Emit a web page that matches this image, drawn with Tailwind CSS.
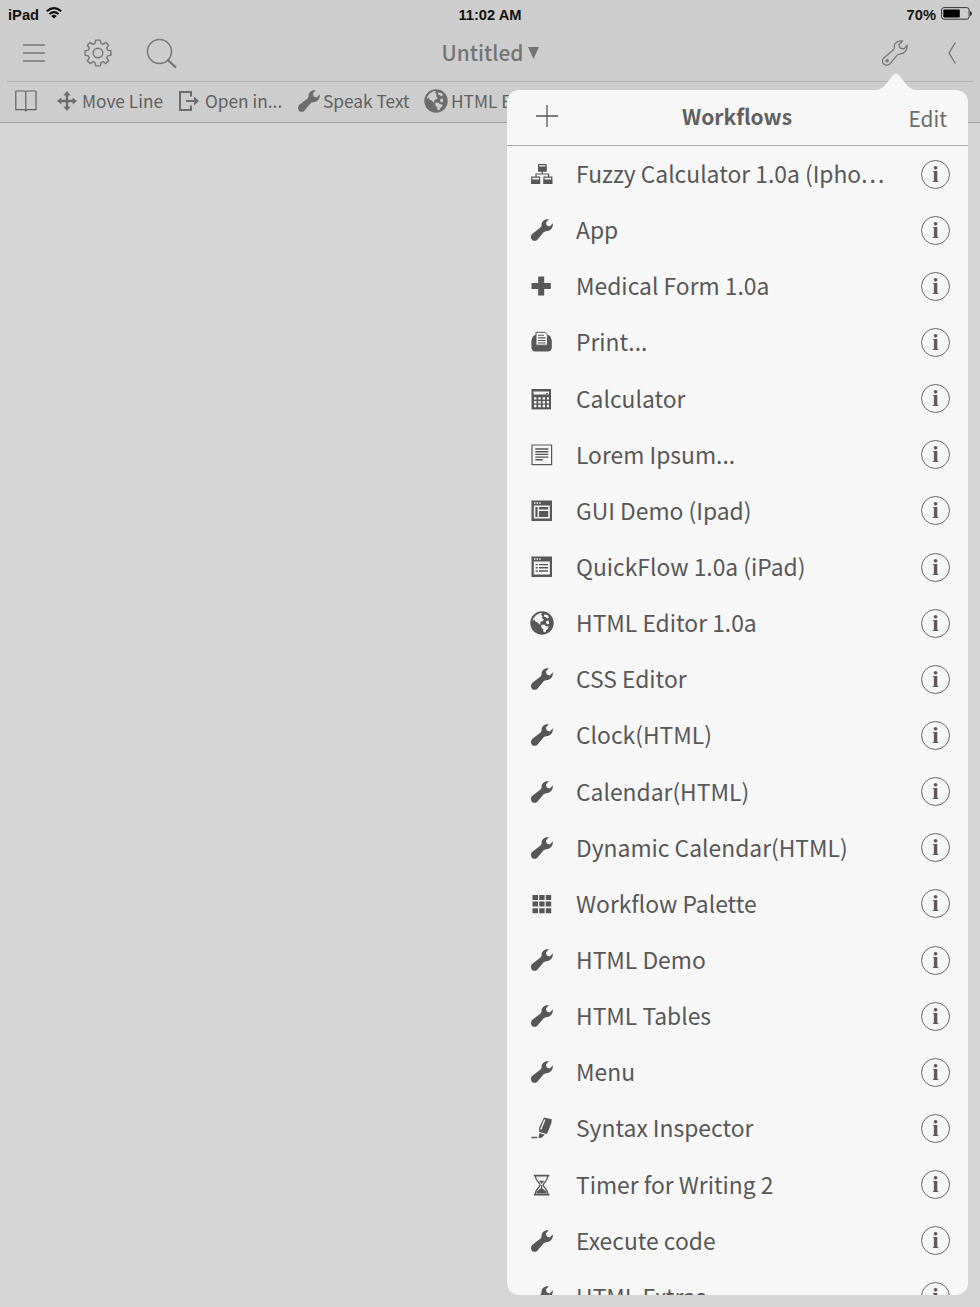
<!DOCTYPE html>
<html lang="en">
<head>
    <meta charset="UTF-8">
    <meta name="viewport" content="width=device-width, initial-scale=1.0">
    <title>Workflows</title>
    <script src="https://cdn.jsdelivr.net/npm/@tailwindcss/browser@4"></script>
</head>
<body class="h-[1307px] overflow-hidden bg-[#d5d5d5] font-['Noto_Sans_CJK_SC','Noto_Sans',sans-serif] text-[#575757]">
    <!-- Icon sprite -->
    <svg class="hidden">
        <symbol id="wrench" viewBox="0 0 22 22">
            <path fill="currentColor" d="M17.8.3C13.6-.4 10.4 2.4 10.6 6 10.6 7.4 10 8 9.2 8.8L1.4 14.8C-.4 16.4-.5 19.3 1.1 20.9 2.8 22.4 5.6 22 6.8 20.2L12.4 13.6C13.2 12.6 14 12.4 15 12.2 19.2 12 22.2 9 21.9 4.3L18.7 7.4 15.8 6.6 14.9 3.6Z"/>
        </symbol>
        <symbol id="globe" viewBox="0 0 24 24">
            <circle cx="12" cy="12" r="11.7" fill="currentColor"/>
            <path class="fill-[var(--hole)]" d="M6 4.2 9.5 2.2 12 2 11 4 12.6 5 12 7.2 13.8 8.4 12.6 10.2 11 10.4 10 12.2 11 13.2 9.6 13.6 7.6 11.6 5.6 10.8 4.4 8.2 2.6 10.4 3.2 7.4ZM14 3.4 17.6 4 19 6.2 17.4 7.6 15.8 6 14.4 6ZM16.4 10 18.6 9.6 19.2 12.4 17.6 13.6 16 12ZM11.2 14 14.4 13.6 15.6 15 18.4 15.6 18.2 17.6 16 19.4 15.4 21.6 13.2 20.6 13.4 18.4 11.4 16.4Z"/>
        </symbol>
        <symbol id="sitemap" viewBox="0 0 22 22">
            <path fill="none" stroke="currentColor" stroke-width="1.2" d="M7.6 1.6H15V8H7.6ZM11.2 8V11M5 14V11H17.6V14M.8 14.2H8.6V20.4H.8ZM13 14.2H20.8V20.4H13Z"/>
            <path fill="currentColor" d="M7 3.6H15.6V8.4H7ZM.4 16.4H9V21H.4ZM12.6 16.4H21.2V21H12.6Z"/>
        </symbol>
        <symbol id="plus" viewBox="0 0 22 22">
            <path fill="currentColor" d="M7.2 1.5H13.2V8H19.8V14H13.2V20.5H7.2V14H.5V8H7.2Z"/>
        </symbol>
        <symbol id="printer" viewBox="0 0 22 22">
            <path fill="currentColor" d="M4 4H17.5L19.5 5.5 20.8 9.5V16Q20.8 20.6 16.6 20.6H4.6Q.4 20.6.4 16V9.5L1.8 5.5Z"/>
            <path class="fill-[#f7f7f7]" stroke="currentColor" stroke-width="1" d="M5 1.3H14L16.4 3.8V14.2H5Z"/>
            <path stroke="currentColor" stroke-width="1.1" d="M7 4.3H13M7 6.9H14.5M7 9.5H14.5M7 12H14.5"/>
        </symbol>
        <symbol id="calculator" viewBox="0 0 22 22">
            <path fill="currentColor" d="M.5 1H20V21.4H.5Z"/>
            <path class="stroke-[#f7f7f7]" stroke-width="3" d="M2.5 5H18"/>
            <path class="stroke-[#f7f7f7]" stroke-width="2.4" stroke-dasharray="2.5 1.8" d="M3 10.4H18M3 14.2H18M3 18H18"/>
            <path stroke="currentColor" d="M15 5.6H17"/>
        </symbol>
        <symbol id="document" viewBox="0 0 22 22">
            <path fill="none" stroke="currentColor" stroke-width="1.2" d="M1 1H20.6V20.6H1Z"/>
            <path stroke="currentColor" stroke-width="1.4" d="M4.3 5H17.3M4.3 7.7H17.3M4.3 10.4H17.3M4.3 13.1H17.3M4.3 15.8H11.8"/>
        </symbol>
        <symbol id="layout" viewBox="0 0 22 22">
            <path fill="currentColor" d="M.5 .5H21V21H.5Z"/>
            <path class="fill-[#f7f7f7]" d="M2.8 5.4H18.8V18.6H2.8ZM3 2.3H4.4V3.7H3ZM5.6 2.3H7V3.7H5.6ZM8.2 2.3H9.6V3.7H8.2Z"/>
            <path fill="currentColor" d="M4.4 7H6.6V17H4.4ZM8 7H17.2V9.4H8ZM8 11H17.2V17H8Z"/>
        </symbol>
        <symbol id="listwin" viewBox="0 0 22 22">
            <path fill="currentColor" d="M.5 .5H21V21H.5Z"/>
            <path class="fill-[#f7f7f7]" d="M2.8 5.4H18.8V18.6H2.8ZM3 2.3H4.4V3.7H3ZM5.6 2.3H7V3.7H5.6ZM8.2 2.3H9.6V3.7H8.2Z"/>
            <path stroke="currentColor" stroke-width="1.4" d="M4.6 8.6H6.8M8 8.6H17M4.6 11.8H6.8M8 11.8H17M4.6 15H6.8M8 15H17"/>
        </symbol>
        <symbol id="grid" viewBox="0 0 22 22">
            <path fill="currentColor" d="M1.5 2H7V7H1.5ZM8.2 2H13.6V7H8.2ZM14.8 2H20.2V7H14.8ZM1.5 8.6H7V13.6H1.5ZM8.2 8.6H13.6V13.6H8.2ZM14.8 8.6H20.2V13.6H14.8ZM1.5 15.2H7V20.2H1.5ZM8.2 15.2H13.6V20.2H8.2ZM14.8 15.2H20.2V20.2H14.8Z"/>
        </symbol>
        <symbol id="marker" viewBox="0 0 22 22">
            <path fill="currentColor" d="M13 .6 20.8 2.2 20.4 6 16 17 8 15 8.2 10.6ZM8.2 16.2 13.8 17.6 11 20.6 7.6 21.2ZM.4 19.8H6.2V21.2H.4Z"/>
            <path class="stroke-[#f7f7f7]" stroke-width="1.3" d="M13.8 2.6 9.8 12.6"/>
        </symbol>
        <symbol id="hourglass" viewBox="0 0 22 22">
            <path stroke="currentColor" stroke-width="1.6" d="M2.8 1.6H18.4M2.8 20.6H18.4"/>
            <path fill="none" stroke="currentColor" stroke-width="1.3" d="M4.4 2C4.4 7.4 9 8.4 9 11S4.4 14.6 4.4 20.2M16.8 2C16.8 7.4 12.2 8.4 12.2 11S16.8 14.6 16.8 20.2"/>
            <path fill="currentColor" d="M8 6.8H13.2L10.6 10ZM10 11H11.2V14.2L15.4 17.4V19.6H5.8V17.4L10 14.2Z"/>
        </symbol>
    </svg>

    <!-- Top bars -->
    <header class="flex h-[123px] flex-col border-b border-[#9c9c9c] bg-[#cdcdcd]">
        <div class="grid h-7 grid-cols-3 items-center pt-0.5 pr-2 pl-2 font-['Liberation_Sans',sans-serif] text-[14.7px] leading-4 font-bold text-[#111]">
            <div class="flex items-center gap-[7px]">
                <span>iPad</span>
                <svg class="mb-1 h-3 w-4" viewBox="0 0 16 12" fill="none" stroke="#111" stroke-width="2">
                    <path d="M.8 4.2Q8-2 15.2 4.2M3.4 7Q8 3.2 12.6 7"/>
                    <path fill="#111" stroke="none" d="M8 11.6 5.2 8.9Q8 6.8 10.8 8.9Z"/>
                </svg>
            </div>
            <span class="text-center">11:02 AM</span>
            <div class="flex items-center justify-end gap-[5px]">
                <span>70%</span>
                <svg class="mb-[3px] h-[13px] w-[31px]" viewBox="0 0 32 13" preserveAspectRatio="none">
                    <rect x=".6" y=".6" width="28.4" height="11.6" rx="2.4" fill="none" stroke="#333"/>
                    <rect x="2.4" y="2.4" width="17" height="8" rx="1" fill="#000"/>
                    <path fill="#222" d="M30 4Q31.8 4.4 31.8 6.4T30 8.9Z"/>
                </svg>
            </div>
        </div>

        <div class="mr-1.5 ml-[7px] grid h-[54px] grid-cols-3 items-center border-b border-[#b2b2b2] pb-[3px] text-[#777]">
            <div class="flex items-center pl-4">
                <svg class="h-[18px] w-[22px]" viewBox="0 0 22 18" stroke="currentColor" stroke-width="1.4"><path d="M0 1H22M0 9H22M0 17H22"/></svg>
                <svg class="ml-[39px] size-7" viewBox="-14 -14 28 28" fill="none" stroke="currentColor" stroke-width="1.4">
                    <circle r="4.8"/>
                    <path stroke-linejoin="round" d="M-2.3-12.9H2.3L3-9.6 5.1-8.7 8-10.6 10.7-7.8 8.8-5 9.6-2.9 12.9-2.3V2.3L9.6 2.9 8.8 5 10.7 7.8 7.9 10.6 5.1 8.7 3 9.6 2.3 12.9H-2.3L-3 9.6-5.1 8.7-7.9 10.6-10.7 7.8-8.8 5-9.6 2.9-12.9 2.3V-2.3L-9.6-2.9-8.8-5-10.7-7.8-8-10.6-5.1-8.7-3-9.6Z"/>
                </svg>
                <svg class="ml-[34px] size-[31px]" viewBox="0 0 31 31" fill="none" stroke="currentColor" stroke-width="1.5">
                    <circle cx="13.5" cy="13.5" r="12"/>
                    <path stroke-width="2.2" d="M21.6 21.6 30 29.6"/>
                </svg>
            </div>
            <div class="flex items-center justify-center gap-[5px] text-[20.8px] leading-6 font-medium text-[#737373]">
                <span class="-mt-[3px]">Untitled</span>
                <svg class="h-3 w-[11px]" viewBox="0 0 11 12"><path fill="currentColor" d="M0 0H11L5.5 12Z"/></svg>
            </div>
            <div class="flex items-center justify-end pr-[18px]">
                <svg class="size-[26px]" viewBox="0 0 26 26" fill="none" stroke="currentColor" stroke-width="1.3" stroke-linejoin="round">
                    <path d="M20.6.9C15.6.2 12 3.2 12.4 7 12.4 8.6 11.8 9.4 11 10.2L2 17.8C0 19.8.1 22.6 1.8 24.1 3.8 25.8 6.8 25.6 8.4 23.4L14.6 15.8C15.4 14.6 16.2 14.4 17.4 14.2 22.4 13.8 25.6 10.4 25.2 5.2L22 9 18 8 16.8 4.4Z"/>
                    <circle cx="5.2" cy="20.7" r="1.1" fill="currentColor"/>
                </svg>
                <svg class="ml-10 h-[22px] w-2" viewBox="0 0 8 22" fill="none" stroke="currentColor" stroke-width="1.4"><path d="M7.4.5 1 11 7.4 21.5"/></svg>
            </div>
        </div>

        <div class="flex h-10 items-center pb-[3px] pl-[15px] text-[17.3px] leading-5 whitespace-nowrap text-[#606060] [--hole:#cdcdcd]">
            <svg class="mt-px h-[22px] w-[22px]" viewBox="0 0 22 22" fill="none" stroke="currentColor" stroke-width="1.2">
                <path d="M10.8 2.2Q10.4 1 9.4 1H1.4Q.8 1 .8 1.8V19.6H9.4Q10.8 19.6 10.8 21.6 10.8 19.6 12.4 19.6H21V1.8Q21 1 20.4 1H12.2Q10.8 1 10.8 2.2ZM10.8 2V21"/>
            </svg>
            <svg class="mt-px ml-5 size-5 text-[#6c6c6c]" viewBox="0 0 20 20" fill="currentColor">
                <path d="M10 0 13.6 4.4H11.2V8.8H15.6V6.4L20 10 15.6 13.6V11.2H11.2V15.6H13.6L10 20 6.4 15.6H8.8V11.2H4.4V13.6L0 10 4.4 6.4V8.8H8.8V4.4H6.4Z"/>
            </svg>
            <span class="ml-[5px] w-[80px]">Move Line</span>
            <svg class="mt-px ml-[17px] size-5 text-[#6c6c6c]" viewBox="0 0 20 20" fill="none" stroke="currentColor" stroke-width="2">
                <path d="M12 5.5V1H1V19H12V14.5M7 10H16"/><path fill="currentColor" stroke="none" d="M15 5.6 20 10 15 14.4Z"/>
            </svg>
            <span class="ml-[6px] w-[76px]">Open in...</span>
            <svg class="mt-px ml-[17px] size-[22px] text-[#6c6c6c]"><use href="#wrench"/></svg>
            <span class="ml-[3px] w-[87px]">Speak Text</span>
            <svg class="mt-px ml-[14px] size-6 text-[#6c6c6c]"><use href="#globe"/></svg>
            <span class="ml-[3px]">HTML Editor</span>
        </div>
    </header>

    <!-- Popover -->
    <div class="absolute top-[90px] left-[507px] h-[1205px] w-[461px]">
        <svg class="absolute -top-[18px] left-[367px] h-[19px] w-[44px]" viewBox="0 0 44 19"><path fill="#f7f7f7" d="M0 19V18Q8 18 12 12L19 3Q22-.2 25 3L32 12Q36 18 44 18V19Z"/></svg>
        <div class="flex h-full flex-col overflow-hidden rounded-xl bg-[#f7f7f7] [--hole:#f7f7f7]">
            <div class="grid h-14 shrink-0 grid-cols-[1fr_auto_1fr] items-center border-b border-[#a8a8a8] pr-[21px] pl-[29px]">
                <svg class="mb-[3px] size-[22px]" viewBox="0 0 22 22" stroke="currentColor" stroke-width="1.3"><path d="M11 0V22M0 11H22"/></svg>
                <h1 class="mr-[9px] mb-1 text-[21px] leading-7 font-bold text-[#606060]">Workflows</h1>
                <span class="text-right text-[20.8px] leading-7 text-[#6b6b6b]">Edit</span>
            </div>
            <ul id="workflows"></ul>
        </div>
    </div>

    <script>
        const workflows = [
            ['sitemap', 'Fuzzy Calculator 1.0a (Ipho<span class="tracking-[2px]">...</span>'],
            ['wrench', 'App'],
            ['plus', 'Medical Form 1.0a'],
            ['printer', 'Print...'],
            ['calculator', 'Calculator'],
            ['document', 'Lorem Ipsum...'],
            ['layout', 'GUI Demo (Ipad)'],
            ['listwin', 'QuickFlow 1.0a (iPad)'],
            ['globe', 'HTML Editor 1.0a'],
            ['wrench', 'CSS Editor'],
            ['wrench', 'Clock(HTML)'],
            ['wrench', 'Calendar(HTML)'],
            ['wrench', 'Dynamic Calendar(HTML)'],
            ['grid', 'Workflow Palette'],
            ['wrench', 'HTML Demo'],
            ['wrench', 'HTML Tables'],
            ['wrench', 'Menu'],
            ['marker', 'Syntax Inspector'],
            ['hourglass', 'Timer for Writing 2'],
            ['wrench', 'Execute code'],
            ['wrench', 'HTML Extras']
        ];

        document.getElementById('workflows').innerHTML = workflows.map(([icon, name]) => `
            <li class="flex h-[56.15px] items-center pr-[18px] pl-6">
                <svg class="shrink-0 ${icon === 'globe' ? '-ml-px size-6' : 'size-[22px]'}"><use href="#${icon}"/></svg>
                <span class="mb-[2px] w-[320px] ${icon === 'globe' ? 'ml-[22px]' : 'ml-[23px]'} text-[22.85px] leading-8 whitespace-nowrap">${name}</span>
                <span class="ml-auto flex size-[29px] shrink-0 items-center justify-center rounded-full border-[1.5px] border-[#666] font-['Liberation_Serif',serif] text-[23px] leading-none font-bold">i</span>
            </li>
        `).join('');
    </script>
</body>
</html>
